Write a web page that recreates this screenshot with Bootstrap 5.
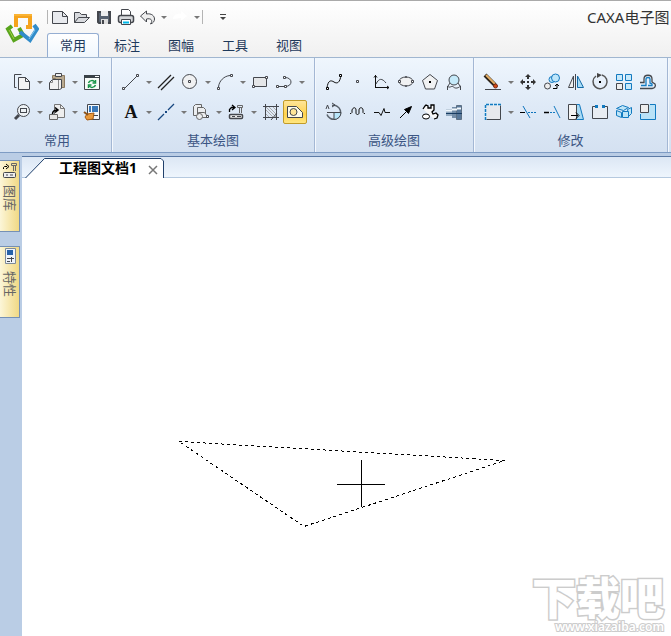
<!DOCTYPE html>
<html lang="zh-CN">
<head>
<meta charset="utf-8">
<meta name="viewport" content="width=device-width, initial-scale=1">
<title>CAXA电子图板</title>
<link href="https://cdn.jsdelivr.net/npm/bootstrap@5.3.0/dist/css/bootstrap.min.css" rel="stylesheet">
<style>
body{font-family:"Noto Sans","Noto Sans CJK SC",sans-serif;font-size:13px;line-height:20px;color:#1e395b}
button{border:0;background:none;padding:0;color:inherit}
svg{display:block;flex:none}
.i{fill:none;stroke:#44474d;stroke-width:1}
.title-area{border-top:1px solid #aaa;background:linear-gradient(#fff,#f0f0f0);height:58px;border-bottom:1px solid #a0b6d0}
.app-logo{width:47px;padding:11px 0 0 5px}
.quick{height:32px}
.quick button.q{width:22px;height:24px}
.quick .dd{width:11px}
.divide{width:1px;height:14px;background:#b4b4b4}
.win-title{font-size:15px;color:#333;width:84px;line-height:32px}
.menu-tabs{gap:2px;height:25px;flex-wrap:nowrap}
.menu-tabs .nav-link{width:52px;height:25px;padding:0;line-height:22px;color:#1e395b;text-align:center;border:1px solid transparent;border-bottom:0;border-radius:3px 3px 0 0}
.menu-tabs .nav-link.active{border-color:#95aed2;background:linear-gradient(#fff,#eff6fd)}
.ribbon{background:linear-gradient(#eff6fd,#dfeaf7 50%,#d4e1f1);height:95px;border-bottom:1px solid #7e9cc4}
.group{padding:12px 7px 0;border-right:1px solid #a3b7d4;box-shadow:1px 0 #f4f8fd}
.group.first{padding-left:10px}
.tool-row{height:24px;margin-bottom:6px}
.tool{width:24px;height:24px}
.dd{width:11px;height:24px}
.dd::before{content:"";display:block;margin:0 auto;border:3px solid transparent;border-top-color:#777;border-bottom:0}
.tool.on{border:1px solid #c29b29;border-radius:2px;background:linear-gradient(#ffe599,#ffd34f 60%,#ffe680)}
.tool.on svg{margin:-1px}
.group-name{text-align:center;color:#3b5583;line-height:20px}
.work{background:#bacde5;padding-top:3px}
.side{width:22px;padding-top:4px;gap:14px}
.side button{width:20px;height:72px;border:1px solid #7590b5;border-left:0;background:linear-gradient(90deg,#fcf6d8,#f1d984);color:#666}
.side span{writing-mode:vertical-rl;text-orientation:sideways;line-height:18px}
.doc-strip{height:22px;background:linear-gradient(#dce7f4,#eef5fd);border-top:1px solid #5b7aa5;border-bottom:1px solid #b5c9df}
.doc-tab{width:142px;height:21px}
.doc-tab .shape{left:0;top:0}
.doc-tab .name{font-size:14px;color:#000;font-weight:700;margin-left:37px}
.doc-tab .close{width:12px;height:22px;margin-left:10px}
.canvas{background:#fff}
.brand{right:7px;bottom:2px;text-align:right;color:#fff;-webkit-text-stroke:2px #ccc;paint-order:stroke fill}
.brand b{font-size:44px;line-height:44px;font-weight:900;display:block;-webkit-text-stroke:3px #ccc}
.brand small{font-size:12px;line-height:14px;font-weight:600;display:block}
</style>
</head>
<body>
<div class="d-flex flex-column vh-100 overflow-hidden">
<header class="title-area d-flex flex-shrink-0">
  <a class="app-logo flex-shrink-0" href="#" aria-label="CAXA"><svg width="34" height="34" fill="none" stroke-width="4"><path d="M11 15V4h14v11h-4" stroke="#f5a31d"/><path d="M7 14l-4 3 6 11 9-5-4-7" stroke="#59a51d"/><path d="M29 13l3 4-7 11-10-8" stroke="#318cca"/><path d="M9 3h18" stroke="#ffc34b" stroke-width="1"/><path d="M4 18l5 9" stroke="#a4ce43" stroke-width="1"/><path d="M30 18l-6 9" stroke="#87c8ef" stroke-width="1"/></svg></a>
  <div class="flex-grow-1 overflow-hidden">
    <div class="quick d-flex align-items-center">
      <i class="divide"></i>
      <div class="d-flex align-items-center">
      <button class="q" aria-label="新建"><svg class="i" width="22" height="24"><path d="M4.500 6.500h10l5 5v7h-15z" fill="#e8eaee"/><path d="M14.500 6.500v5h5"/></svg></button>
      <button class="q" aria-label="打开"><svg class="i" width="22" height="24"><path d="M4.500 17.500v-10h5l2 2h5v3M4.500 17.500l4-5h11l-5 5z" fill="#d8dade"/></svg></button>
      <button class="q" aria-label="保存"><svg class="i" width="22" height="24"><path d="M6 7h12v11H7l-1-1z" fill="#586270" stroke-width="2"/><path d="M9 6h7v5H9z" fill="#eee" stroke="none"/><path d="M9 14h7v5H9z" fill="#ddd" stroke="none"/><path d="M11 15v4" stroke-width="2"/></svg></button>
      <button class="q" aria-label="打印"><svg class="i" width="22" height="24"><path d="M7.500 10.500v-6h7l2 2v4" fill="#fff"/><rect x="4.500" y="10.500" width="15" height="7" rx="2" fill="#d5d7da" stroke-width="1.500"/><path d="M7.500 14.500h9v5h-9z" fill="#fff"/><path d="M9 17.500h6" stroke="#00b8e8" stroke-width="2"/></svg></button>
      <button class="q" aria-label="撤消"><svg class="i" width="22" height="24"><path d="M4.500 11l6-5v3c5-1 8 2 8 5 0 2-1 4-4 5 3-4 0-6-4-5v3z" fill="#eee"/></svg></button>
      <button class="dd d-flex align-items-center" aria-label="撤消选项"></button>
      <button class="q" aria-label="恢复"><svg width="22" height="24"><path d="M18 11l-6-5v3c-5-1-8 2-8 5l8-1v3z" fill="#fff"/></svg></button>
      <button class="dd d-flex align-items-center" aria-label="恢复选项"></button>
      </div>
      <i class="divide"></i>
      <button class="ms-3" aria-label="自定义"><svg width="8" height="24"><path d="M1 9.500h6" stroke="#444"/><path d="M1 12h6l-3 3z" fill="#444"/></svg></button>
      <div class="win-title ms-auto text-nowrap overflow-hidden">CAXA电子图</div>
    </div>
    <nav class="nav menu-tabs"><a class="nav-link active" href="#">常用</a><a class="nav-link" href="#">标注</a><a class="nav-link" href="#">图幅</a><a class="nav-link" href="#">工具</a><a class="nav-link" href="#">视图</a></nav>
  </div>
</header>
<main class="ribbon d-flex flex-shrink-0">
  <section class="group first">
    <div class="tool-row d-flex">
      <button class="tool" aria-label="复制"><svg class="i" width="24" height="24"><path d="M6.500 17.500h-2v-13h7"/><path d="M8.500 7.500h7l4 4v8h-11z" fill="#f3f3f3"/><path d="M15.500 7.500v4h4"/></svg></button>
      <button class="dd d-flex align-items-center" aria-label="复制选项"></button>
      <button class="tool" aria-label="粘贴"><svg class="i" width="24" height="24"><path d="M7.500 5.500h12v12h-9v-9h-3z" fill="#b9aa90" stroke="#8b7a61"/><path d="M10.500 3.500h6v3h-6z" fill="#eee"/><path d="M4.500 12.500l3-3h9v9l-2 1h-10z" fill="#f2f2f2"/><path d="M4.500 12.500h3v-3M13.500 10v9" stroke="#888"/></svg></button>
      <button class="dd d-flex align-items-center" aria-label="粘贴选项"></button>
      <button class="tool" aria-label="刷新"><svg class="i" width="24" height="24"><path d="M4.500 5.500h15v14h-15z" fill="#f7fbf8"/><path d="M4 6.500h16" stroke="#394147" stroke-width="3"/><path d="M15 6.500h4" stroke="#fff"/><path d="M8.500 13c1-3 5-3 6-1M15.500 10v3h-3M15.500 15c-1 3-5 3-6 1M8.500 18v-3h3" stroke="#179447" stroke-width="1.500"/></svg></button>
    </div>
    <div class="tool-row d-flex">
      <button class="tool" aria-label="缩放"><svg class="i" width="24" height="24"><circle cx="13.500" cy="10.500" r="6" fill="#eef2f5"/><rect x="10.500" y="8.500" width="6" height="4"/><path d="M9 15l-4 4" stroke-width="3"/></svg></button>
      <button class="dd d-flex align-items-center" aria-label="缩放选项"></button>
      <button class="tool" aria-label="复制到"><svg class="i" width="24" height="24"><path d="M9.500 4.500h6l4 4v9h-10z" fill="#eee" stroke="#777"/><path d="M15.500 4.500v4h4" stroke="#777"/><path d="M4.500 14.500h8v5h-8z" fill="#e5e5e5" stroke="#666"/><path d="M7.500 14c0-3 2-4 5-4M10 7.500l3 2.500-3 2.500" stroke="#000" stroke-width="1.500"/></svg></button>
      <button class="dd d-flex align-items-center" aria-label="复制到选项"></button>
      <button class="tool" aria-label="特性匹配"><svg class="i" width="24" height="24"><path d="M7.500 4.500h12v15h-12z" fill="#f3f7fb"/><path d="M12 6h6v6h-6zM9 6h2v6H9z" fill="#3978b8" stroke="none"/><path d="M13 15.500h5"/><path d="M7 14l7-1-1 6-6 1-2-3z" fill="#e9993a" stroke="#a75b13"/><path d="M4 12l4 3" stroke="#8d541a" stroke-width="2"/></svg></button>
    </div>
    <div class="group-name">常用</div>
  </section>
  <section class="group">
    <div class="tool-row d-flex">
      <button class="tool" aria-label="直线"><svg class="i" width="24" height="24"><path d="M6 18L18 6"/><path d="M3.500 17.500h2v2h-2zM17.500 4.500h2v2h-2z" fill="#fff"/></svg></button>
      <button class="dd d-flex align-items-center" aria-label="直线选项"></button>
      <button class="tool" aria-label="平行线"><svg class="i" width="24" height="24"><path d="M4 18L17 5M7 20L20 7" stroke="#222" stroke-width="1.300"/></svg></button>
      <button class="tool" aria-label="圆"><svg class="i" width="24" height="24"><circle cx="11.500" cy="11.500" r="7" fill="#f0f1f2"/><path d="M10.500 10.500h2v2h-2z"/></svg></button>
      <button class="dd d-flex align-items-center" aria-label="圆选项"></button>
      <button class="tool" aria-label="圆弧"><svg class="i" width="24" height="24"><path d="M5.500 17C6 11 11 6 17 5.500"/><path d="M4.500 17.500h2v2h-2zM17.500 4.500h2v2h-2z" fill="#fff"/></svg></button>
      <button class="dd d-flex align-items-center" aria-label="圆弧选项"></button>
      <button class="tool" aria-label="矩形"><svg class="i" width="24" height="24"><path d="M5.500 7.500h13v9h-13z" fill="#e4e6e8"/><path d="M4.500 15.500h2v2h-2zM17.500 6.500h2v2h-2z" fill="#fff"/></svg></button>
      <button class="tool" aria-label="多段线"><svg class="i" width="24" height="24"><path d="M5 16.500h8c8 0 8-9 0-9"/><path d="M11.500 6.500h2v2h-2zM4.500 15.500h2v2h-2zM12.500 15.500h2v2h-2z" fill="#fff"/></svg></button>
      <button class="dd d-flex align-items-center" aria-label="多段线选项"></button>
    </div>
    <div class="tool-row d-flex">
      <button class="tool" aria-label="文字"><svg width="24" height="24"><text x="12" y="18" text-anchor="middle" font-family="Liberation Serif,serif" font-size="18" font-weight="700" fill="#111">A</text></svg></button>
      <button class="dd d-flex align-items-center" aria-label="文字选项"></button>
      <button class="tool" aria-label="中心线"><svg class="i" width="24" height="24"><path d="M4 20l6-6M14 10l6-6" stroke="#174780" stroke-width="1.300"/><path d="M11 11h2v2h-2z" fill="#174780" stroke="none"/></svg></button>
      <button class="dd d-flex align-items-center" aria-label="中心线选项"></button>
      <button class="tool" aria-label="块"><svg class="i" width="24" height="24"><g fill="#eceef0" stroke="#666"><path d="M4.500 15.500v-9l2-2h6v11z"/><path d="M8.500 7.500h6l2 2v5h-8z"/><path d="M9.500 12.500h6l3 4v1h-9z"/><circle cx="10.500" cy="16.500" r="3"/></g><path d="M17.500 15.500h2v2h-2z" fill="#fff"/></svg></button>
      <button class="dd d-flex align-items-center" aria-label="块选项"></button>
      <button class="tool" aria-label="图库"><svg class="i" width="24" height="24"><path d="M5.500 12V9.500l2-2H10M8 5l3 2.500L8 10" stroke="#000" stroke-width="1.300"/><path d="M13.500 5.500h5v2h-5zM15.500 8v5M17.500 8v5" stroke="#666"/><rect x="5.500" y="14.500" width="13" height="4" rx="1" fill="#eee" stroke-width="1.500"/><path d="M8 16.500h3M13 16.500h4"/></svg></button>
      <button class="dd d-flex align-items-center" aria-label="图库选项"></button>
      <button class="tool" aria-label="剖面线"><svg class="i" width="24" height="24"><path d="M7 10l7 7M7 7l10 10M10 7l7 7M7 14l3 3M14 7l3 3" stroke="#aaa"/><path d="M4 6.500h16M4 17.500h16M6.500 4v16M17.500 4v16M18 13l-6 7"/></svg></button>
      <button class="tool on" aria-label="填充" aria-pressed="true"><svg class="i" width="24" height="24"><path d="M4.500 6.500h9l6 6v5h-15z" fill="#fffce8"/><circle cx="10.500" cy="12" r="3.500" fill="#ffe697"/></svg></button>
    </div>
    <div class="group-name">基本绘图</div>
  </section>
  <section class="group">
    <div class="tool-row d-flex">
      <button class="tool" aria-label="样条"><svg class="i" width="24" height="24"><path d="M5 18c1-8 4-8 7-6s6 1 7-7" stroke="#111"/><path d="M4.500 17.500h2v2h-2zM17.500 4.500h2v2h-2z" fill="#fff" stroke="#000"/></svg></button>
      <button class="tool" aria-label="点"><svg class="i" width="24" height="24"><path d="M10.500 10.500h2v2h-2z" fill="#fff"/></svg></button>
      <button class="tool" aria-label="公式曲线"><svg class="i" width="24" height="24"><path d="M5.500 5v13M5 17.500h14M4 7.500l1.500-2 1.500 2M17 16l2 1.500-2 1.500" stroke="#111"/><path d="M6 14c3-6 6-6 10-1"/></svg></button>
      <button class="tool" aria-label="椭圆"><svg class="i" width="24" height="24"><ellipse cx="12" cy="11.500" rx="7" ry="4.500" fill="#f0f1f2"/><path d="M4.500 10.500h2v2h-2zM17.500 10.500h2v2h-2zM11.500 6.500h1v1h-1zM11.500 15.500h1v1h-1z" fill="#fff"/></svg></button>
      <button class="tool" aria-label="多边形"><svg class="i" width="24" height="24"><path d="M12 4.500l7.500 6-3 8.500h-9l-3-8.500z" fill="#f1f2f3"/><path d="M11 11h2v2h-2z" fill="#000" stroke="none"/></svg></button>
      <button class="tool" aria-label="局部放大"><svg class="i" width="24" height="24"><circle cx="12" cy="10" r="5" fill="#c5eafa"/><path d="M5.500 20v-4c2 3 4-1 6 1s5 1 7-1v4M8 13l-2 3M16 13l2 3"/></svg></button>
    </div>
    <div class="tool-row d-flex">
      <button class="tool" aria-label="圆孔"><svg class="i" width="24" height="24"><path d="M10 5.500a7 7 0 1 1-5 9" stroke="#59626b" stroke-width="1.500"/><path d="M12 12.500h7a7 7 0 0 1-7 7z" fill="#b9e6fa"/><path d="M5 12.500h7M4 9l1.500-4L7 9M10 3l3 2-3 2"/></svg></button>
      <button class="tool" aria-label="波浪线"><svg class="i" width="24" height="24"><path d="M4 13.500h1l1-1V10c1-3 4-3 4 0v3c0 2 3 2 3 0v-3c0-3 4-3 4 0v2.500l1 1h1" stroke="#111"/></svg></button>
      <button class="tool" aria-label="双折线"><svg class="i" width="24" height="24"><path d="M4 12.500h5l2 3 3-7 1 4h5" stroke="#111"/></svg></button>
      <button class="tool" aria-label="箭头"><svg class="i" width="24" height="24"><path d="M6 18l8-8" stroke="#000"/><path d="M17.500 6.500l-3 7-4-4z" fill="#000" stroke="#000"/></svg></button>
      <button class="tool" aria-label="齿轮"><svg class="i" width="24" height="24"><path d="M5 9l2-3 1-1 2 1v2h3V5h3v5l-2 2 1 2 3-1 2 2-1 3-3 1" stroke="#000" stroke-width="1.300" fill="#f8f8f8"/><ellipse cx="8" cy="16.500" rx="3.500" ry="2.500" fill="#fff" stroke="#000"/></svg></button>
      <button class="tool" aria-label="轴"><svg class="i" width="24" height="24"><path d="M4 9h6v7H4z" fill="#91a9c0" stroke="none"/><path d="M10 7h5v11h-5z" fill="#738da8" stroke="none"/><path d="M14.500 5.500h5v14h-5z" fill="#58789a" stroke="#5d7084"/><path d="M4 10.500h6M10 9.500h5M15 8.500h4" stroke="#f2f8fc" stroke-width="2"/><path d="M4 13.500h16" stroke="#183c62"/></svg></button>
    </div>
    <div class="group-name">高级绘图</div>
  </section>
  <section class="group">
    <div class="tool-row d-flex">
      <button class="tool" aria-label="删除"><svg class="i" width="24" height="24"><path d="M4 19.500h16"/><path d="M4 5l10 10" stroke="#2a2119" stroke-width="4"/><path d="M5 5l9 9" stroke="#e3ae66" stroke-width="2"/><circle cx="14.500" cy="16" r="2" fill="#d44b16" stroke="#792a12"/></svg></button>
      <button class="dd d-flex align-items-center" aria-label="删除选项"></button>
      <button class="tool" aria-label="平移"><svg width="24" height="24" fill="#333"><path d="M12 4l3 3h-2v2h-2V7H9zM12 20l3-3h-2v-2h-2v2H9zM4 12l3-3v2h2v2H7v2zM20 12l-3-3v2h-2v2h2v2zM11 11h2v2h-2z"/></svg></button>
      <button class="tool" aria-label="平移复制"><svg class="i" width="24" height="24"><circle cx="7.500" cy="16" r="3" fill="#eee"/><g stroke="#167ac0"><circle cx="12" cy="9.500" r="3" fill="#bee6fa"/><circle cx="15.500" cy="8" r="4" fill="#bee6fa"/></g><path d="M13 18.500h4v-4M15 16l2-2 2 2" stroke="#000"/></svg></button>
      <button class="tool" aria-label="镜像"><svg class="i" width="24" height="24"><path d="M11.500 4v16"/><path d="M9.500 6v11.500h-5z" fill="#eee"/><path d="M13.500 6v11.500h6z" fill="#a8dcf6" stroke="#136ba8"/></svg></button>
      <button class="tool" aria-label="旋转"><svg class="i" width="24" height="24"><path d="M8 6a7 7 0 1 0 6-1" stroke="#555" stroke-width="1.500"/><path d="M9 3l5 2-5 3z" fill="#444" stroke="none"/><path d="M11 11h2v2h-2z" fill="#000" stroke="none"/></svg></button>
      <button class="tool" aria-label="阵列"><svg class="i" width="24" height="24"><g fill="#c8e9fa" stroke="#147ac0"><path d="M4.500 4.500h6v6h-6zM13.500 4.500h6v6h-6zM13.500 13.500h6v6h-6z"/></g><path d="M4.500 13.500h6v6h-6z" fill="#eee"/></svg></button>
      <button class="tool" aria-label="等距线"><svg class="i" width="24" height="24"><path d="M4 12.500h4V9c0-5 8-5 8 0v3l3 2c1 2 0 4-3 4.500H4" stroke-width="1.300"/><path d="M5 15.500h5V9c0-2 4-2 4 0v4l2 1v1.500h-4" stroke="#157dc3" stroke-width="1.300"/></svg></button>
    </div>
    <div class="tool-row d-flex">
      <button class="tool" aria-label="裁剪"><svg class="i" width="24" height="24"><path d="M4.500 4.500h15v15h-15z" fill="#e7e9ed"/><path d="M4.500 20V4.500H20" stroke="#d9edfa" stroke-width="2"/><path d="M4.500 20V4.500H20" stroke="#127ac0" stroke-width="1.500" stroke-dasharray="3 1"/></svg></button>
      <button class="dd d-flex align-items-center" aria-label="裁剪选项"></button>
      <button class="tool" aria-label="修剪"><svg class="i" width="24" height="24"><path d="M4 12.500h5" stroke="#000"/><path d="M7 6l7 12" stroke="#0d73bd"/><path d="M12 12.500h8" stroke="#0d73bd" stroke-dasharray="2 1"/></svg></button>
      <button class="tool" aria-label="延伸"><svg class="i" width="24" height="24"><path d="M4 12.500h5" stroke="#000" stroke-width="1.500"/><path d="M10 12.500h6" stroke="#127ac0" stroke-dasharray="2 1"/><path d="M14 6l6 12" stroke="#127ac0"/></svg></button>
      <button class="tool" aria-label="拉伸"><svg class="i" width="24" height="24"><path d="M12.500 4.500h3l4 15h-7z" fill="#a9daf4" stroke="#127ac0"/><path d="M4.500 4.500h8v15h-8z" fill="#f4f4f4"/><path d="M7 15.500h7M12 12.500l3 3-3 3" stroke="#000"/></svg></button>
      <button class="tool" aria-label="打断"><svg class="i" width="24" height="24"><path d="M4.500 6.500h15v12h-15z" fill="#e9edf2" stroke="none"/><path d="M8 6.500H4.500v12h15v-12H16"/><path d="M7 5h3v3H7zM14 5h3v3h-3z" fill="#127ac0" stroke="none"/></svg></button>
      <button class="tool" aria-label="分解"><svg class="i" width="24" height="24"><g stroke="#127ac0" fill="#bee5f8"><path d="M4.500 8.500l6-3 6 2-5 3zM4.500 10.500l5 2v5l-5-2zM15.500 9.500l4-2v6l-3 3z"/><path d="M10.500 11.500h6v6h-6z"/></g></svg></button>
      <button class="tool" aria-label="比例缩放"><svg class="i" width="24" height="24"><path d="M4.500 4.500h15v15h-15z" fill="#b9e2f7" stroke="none"/><path d="M14 4.500h5.500v15h-15V14" stroke="#127ac0"/><path d="M4.500 4.500h8v8h-8z" fill="#eee"/></svg></button>
    </div>
    <div class="group-name">修改</div>
  </section>
</main>
<div class="work d-flex flex-grow-1">
  <aside class="side d-flex flex-column flex-shrink-0">
    <button class="d-flex flex-column align-items-center"><svg class="i" width="18" height="20"><path d="M2.500 8V6.500l1-1H6M5 3l3 2.500L5 8" stroke="#000"/><path d="M10.500 2.500h5v2h-5zM12.500 5v5M14.500 5v5" stroke="#666"/><rect x="2.500" y="11.500" width="12" height="5" rx="1" fill="#eee"/><path d="M5 14h2M9 14h3"/></svg><span class="mt-1">图库</span></button>
    <button class="d-flex flex-column align-items-center"><svg class="i" width="18" height="20"><path d="M4.500 1.500h10v15h-10z" fill="#eef3fa" stroke="#7c8a9b"/><path d="M6 3h6v5H6z" fill="#2661a8" stroke="none"/><path d="M6 11.500h7M10.500 10v5M6 14.500h3"/></svg><span class="mt-1">特性</span></button>
  </aside>
  <div class="d-flex flex-column flex-grow-1">
    <div class="doc-strip flex-shrink-0">
      <div class="doc-tab position-relative d-flex align-items-center">
        <svg class="shape position-absolute" width="143" height="22"><path d="M3 22L22.500 1.500H139l2.500 2.500v18z" fill="#fff"/><path d="M3 21.500L22.500 1.500H139l2.500 2.500v18" fill="none" stroke="#21406b"/></svg>
        <span class="name position-relative text-nowrap">工程图文档1</span>
        <button class="close position-relative" aria-label="关闭"><svg width="12" height="24"><path d="M2 9l8 8M10 9l-8 8" stroke="#777" stroke-width="1.500"/></svg></button>
      </div>
    </div>
    <div class="canvas flex-grow-1 position-relative">
      <svg class="position-absolute" width="100%" height="100%" fill="none" stroke="#000" shape-rendering="crispEdges"><path d="M157 263.500L483 282.500L282 348.500Z" stroke-dasharray="3 3"/><path d="M339.500 282v47M315 306.500h48"/></svg>
      <div class="brand position-absolute"><b>下载吧</b><small>www.xiazaiba.com</small></div>
    </div>
  </div>
</div>
</div>
<script src="https://cdn.jsdelivr.net/npm/bootstrap@5.3.0/dist/js/bootstrap.bundle.min.js"></script>
</body>
</html>
